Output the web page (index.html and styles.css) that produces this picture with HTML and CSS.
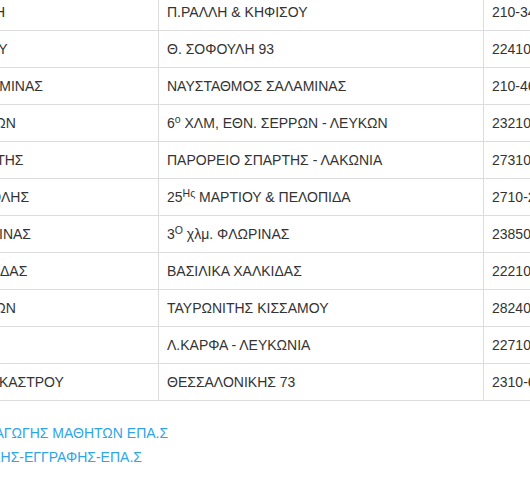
FILE: index.html
```html
<!DOCTYPE html>
<html lang="el">
<head>
<meta charset="utf-8">
<title>ΕΠΑ.Σ</title>
<link rel="stylesheet" href="styles.css">
</head>
<body>
<div class="page">
  <table class="schools">
    <colgroup>
      <col class="c-name">
      <col class="c-addr">
      <col class="c-tel">
    </colgroup>
    <tbody>
      <tr><td>ΕΠΑ.Σ ΑΓ. ΙΩΑΝΝΗ ΡΕΝΤΗ</td><td>Π.ΡΑΛΛΗ &amp; ΚΗΦΙΣΟΥ</td><td>210-3477261</td></tr>
      <tr><td>ΕΠΑΣ ΜΑΘΗΤΕΙΑΣ ΡΟΔΟΥ</td><td>Θ. ΣΟΦΟΥΛΗ 93</td><td>22410-30393</td></tr>
      <tr><td>ΕΠΑ.Σ ΜΑΘΗΤΕΙΑΣ ΣΑΛΑΜΙΝΑΣ</td><td>ΝΑΥΣΤΑΘΜΟΣ ΣΑΛΑΜΙΝΑΣ</td><td>210-4653421</td></tr>
      <tr><td>ΕΠΑΣ ΜΑΘΗΤΕΙΑΣ ΣΕΡΡΩΝ</td><td>6<sup>ο</sup> ΧΛΜ, ΕΘΝ. ΣΕΡΡΩΝ - ΛΕΥΚΩΝ</td><td>23210-47330</td></tr>
      <tr><td>ΕΠΑΣ ΜΑΘΗΤΕΙΑΣ ΣΠΑΡΤΗΣ</td><td>ΠΑΡΟΡΕΙΟ ΣΠΑΡΤΗΣ - ΛΑΚΩΝΙΑ</td><td>27310-89172</td></tr>
      <tr><td>ΕΠΑΣ ΜΑΘΗΤΕΙΑΣ ΤΡΙΠΟΛΗΣ</td><td>25<sup>Ης</sup> ΜΑΡΤΙΟΥ &amp; ΠΕΛΟΠΙΔΑ</td><td>2710-222780</td></tr>
      <tr><td>ΕΠΑΣ ΜΑΘΗΤΕΙΑΣ ΦΛΩΡΙΝΑΣ</td><td>3<sup>Ο</sup> χλμ. ΦΛΩΡΙΝΑΣ</td><td>23850-22255</td></tr>
      <tr><td>ΕΠΑΣ ΜΑΘΗΤΕΙΑΣ ΧΑΛΚΙΔΑΣ</td><td>ΒΑΣΙΛΙΚΑ ΧΑΛΚΙΔΑΣ</td><td>22210-28011</td></tr>
      <tr><td>ΕΠΑ.Σ ΜΑΘΗΤΕΙΑΣ ΧΑΝΙΩΝ</td><td>ΤΑΥΡΩΝΙΤΗΣ ΚΙΣΣΑΜΟΥ</td><td>28240-22330</td></tr>
      <tr><td>ΕΠΑ.Σ ΜΑΘΗΤΕΙΑΣ ΧΙΟΥ</td><td>Λ.ΚΑΡΦΑ - ΛΕΥΚΩΝΙΑ</td><td>22710-43888</td></tr>
      <tr><td>ΕΠΑ.Σ ΜΑΘΗΤΕΙΑΣ ΕΠΤΑΚΑΣΤΡΟΥ</td><td>ΘΕΣΣΑΛΟΝΙΚΗΣ 73</td><td>2310-608020</td></tr>
    </tbody>
  </table>
  <div class="docs">
    <a href="#">ΠΡΟΚΗΡΥΞΗ ΕΙΣΑΓΩΓΗΣ ΜΑΘΗΤΩΝ ΕΠΑ.Σ</a>
    <a href="#">ΑΙΤΗΣΗ — ΔΗΛΩΣΗΣ-ΕΓΓΡΑΦΗΣ-ΕΠΑ.Σ</a>
  </div>
</div>
</body>
</html>
```
FILE: styles.css
```css
html, body {
  margin: 0;
  padding: 0;
  background: #ffffff;
  overflow: hidden;
}

body {
  font-family: "Liberation Sans", Arial, sans-serif;
  font-size: 14px;
  line-height: 1.428571429;
  color: #333333;
}

.page {
  margin: -7px 0 0 -177px;
  width: 900px;
}

.schools {
  border-collapse: collapse;
  border-spacing: 0;
  table-layout: fixed;
  width: 860px;
  margin-bottom: 20px;
  border: 1px solid #dddddd;
}

.c-name { width: 335px; }
.c-addr { width: 325px; }
.c-tel  { width: 200px; }

.schools td {
  padding: 8px;
  line-height: 20px;
  vertical-align: top;
  border: 1px solid #dddddd;
  white-space: nowrap;
  overflow: hidden;
}

.schools sup {
  font-size: 75%;
  line-height: 0;
  position: relative;
  top: -0.5em;
  vertical-align: baseline;
}

.docs {
  display: flex;
  flex-direction: column;
  align-items: flex-start;
  padding-left: 58px;
}

.docs a {
  color: #2fa4e7;
  text-decoration: none;
  line-height: 24px;
  white-space: nowrap;
}
```
